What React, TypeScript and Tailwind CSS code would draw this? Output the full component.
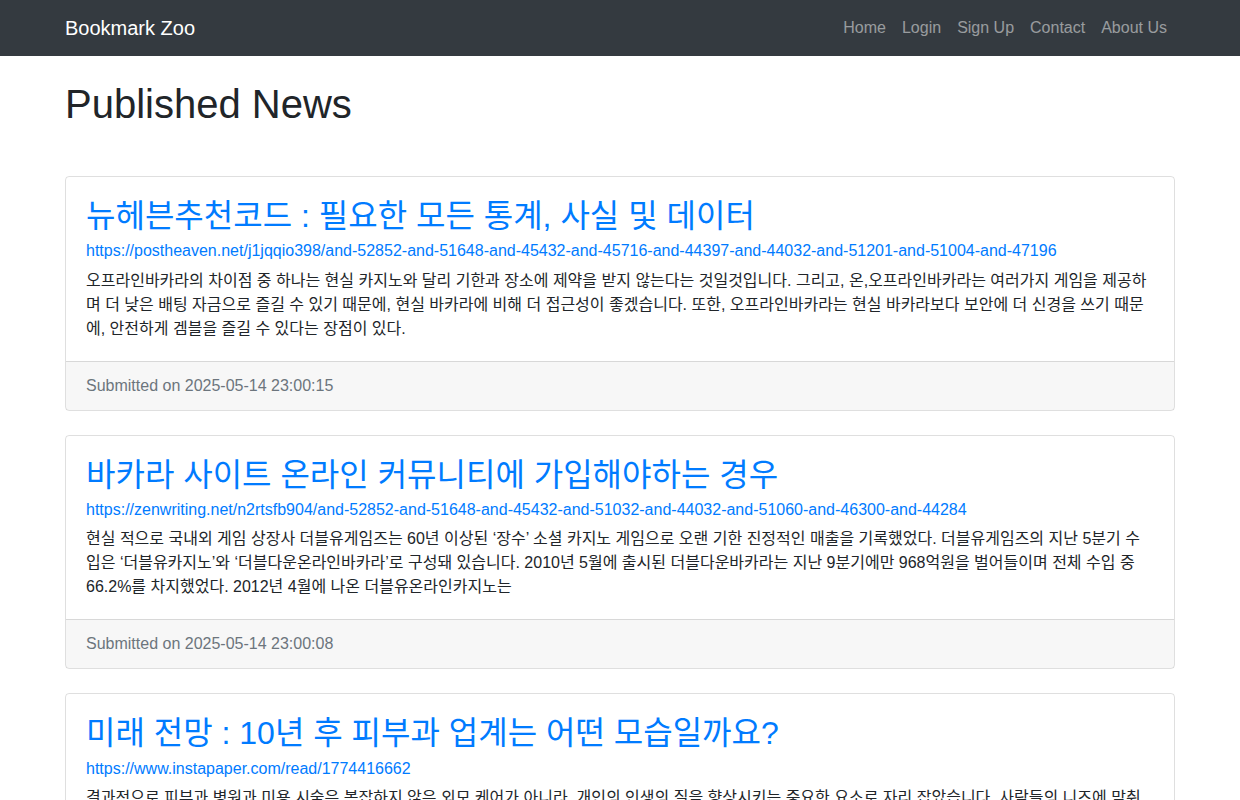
const news = [
  {
    title: '뉴헤븐추천코드 : 필요한 모든 통계, 사실 및 데이터',
    url: 'https://postheaven.net/j1jqqio398/and-52852-and-51648-and-45432-and-45716-and-44397-and-44032-and-51201-and-51004-and-47196',
    body: '오프라인바카라의 차이점 중 하나는 현실 카지노와 달리 기한과 장소에 제약을 받지 않는다는 것일것입니다. 그리고, 온,오프라인바카라는 여러가지 게임을 제공하며 더 낮은 배팅 자금으로 즐길 수 있기 때문에, 현실 바카라에 비해 더 접근성이 좋겠습니다. 또한, 오프라인바카라는 현실 바카라보다 보안에 더 신경을 쓰기 때문에, 안전하게 겜블을 즐길 수 있다는 장점이 있다.',
    date: '2025-05-14 23:00:15',
  },
  {
    title: '바카라 사이트 온라인 커뮤니티에 가입해야하는 경우',
    url: 'https://zenwriting.net/n2rtsfb904/and-52852-and-51648-and-45432-and-51032-and-44032-and-51060-and-46300-and-44284',
    body: '현실 적으로 국내외 게임 상장사 더블유게임즈는 60년 이상된 ‘장수’ 소셜 카지노 게임으로 오랜 기한 진정적인 매출을 기록했었다. 더블유게임즈의 지난 5분기 수입은 ‘더블유카지노’와 ‘더블다운온라인바카라’로 구성돼 있습니다. 2010년 5월에 출시된 더블다운바카라는 지난 9분기에만 968억원을 벌어들이며 전체 수입 중 66.2%를 차지했었다. 2012년 4월에 나온 더블유온라인카지노는',
    date: '2025-05-14 23:00:08',
  },
  {
    title: '미래 전망 : 10년 후 피부과 업계는 어떤 모습일까요?',
    url: 'https://www.instapaper.com/read/1774416662',
    body: '결과적으로 피부과 병원과 미용 시술은 복잡하지 않은 외모 케어가 아니라, 개인의 인생의 질을 향상시키는 중요한 요소로 자리 잡았습니다. 사람들의 니즈에 맞춰',
    date: '2025-05-14 22:59:58',
  },
];

const navLinks = ['Home', 'Login', 'Sign Up', 'Contact', 'About Us'];

export default function App() {
  return (
    <div className="h-[800px] overflow-hidden bg-white text-[#212529] font-['Liberation_Sans','Noto_Sans_CJK_KR',sans-serif] text-base leading-6">
      <nav className="h-14 bg-[#343a40]">
        <div className="w-[1140px] mx-auto px-[15px] h-full flex items-center justify-between">
          <a className="text-xl leading-[30px] text-white">Bookmark Zoo</a>
          <ul className="flex">
            {navLinks.map((link) => (
              <li key={link} className="px-2 text-[#ffffff80]">{link}</li>
            ))}
          </ul>
        </div>
      </nav>
      <main className="w-[1140px] mx-auto px-[15px]">
        <h1 className="mt-6 mb-12 text-[40px] leading-12 font-normal">Published News</h1>
        {news.map((item) => (
          <div key={item.url} className="mb-6 border border-[#00000020] rounded">
            <div className="px-5 pt-5 pb-[19.8px]">
              <h2 className="mb-1 text-[32px] leading-[38.4px] font-normal text-[#007bff]">{item.title}</h2>
              <a className="block mb-[5.4px] text-[#007bff]">{item.url}</a>
              <p>{item.body}</p>
            </div>
            <div className="px-5 py-3 bg-[#00000008] border-t border-[#00000020] text-[#6c757d]">
              Submitted on {item.date}
            </div>
          </div>
        ))}
      </main>
    </div>
  );
}
